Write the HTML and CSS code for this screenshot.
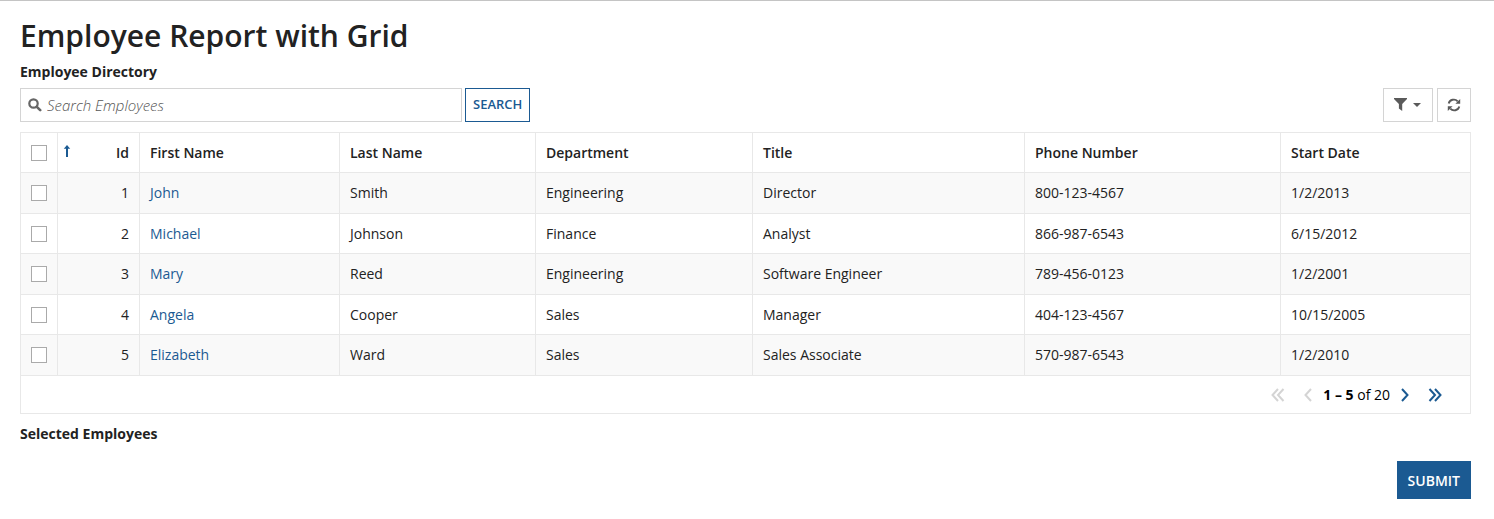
FILE: index.html
```html
<!DOCTYPE html>
<html lang="en">
<head>
  <meta charset="UTF-8" />
  <meta name="viewport" content="width=device-width, initial-scale=1.0" />
  <title>Employee Report with Grid</title>
  <link rel="stylesheet" href="styles.css">
</head>
<body>
  <main class="page">
    <h1>Employee Report with Grid</h1>

    <h2>Employee Directory</h2>
    <div class="toolbar">
      <form class="search" onsubmit="return false">
        <label class="search-box">
          <svg width="14" height="14" viewBox="0 0 14 14" aria-hidden="true"><circle cx="5.5" cy="5.5" r="4.2" fill="none" stroke="#666" stroke-width="2.2"/><path d="M8.8 8.8l3.4 3.4" stroke="#666" stroke-width="2.6" stroke-linecap="round"/></svg>
          <input type="text" placeholder="Search Employees" aria-label="Search Employees">
        </label>
        <button class="search-btn">SEARCH</button>
      </form>
      <div class="tools">
        <button class="tool filter" aria-label="Filter">
          <svg width="13" height="13" viewBox="0 0 13 13"><path d="M0 0h13v1L8.2 6v7L4.9 10.4V6L0 1z" fill="#5a5a5a"/></svg>
          <svg width="8" height="4" viewBox="0 0 8 4"><path d="M0 0h8L4 4z" fill="#5a5a5a"/></svg>
        </button>
        <button class="tool" aria-label="Refresh">
          <svg width="14" height="14" viewBox="0 0 14 14"><path d="M1.7 5.6A5.3 5.3 0 0 1 10.7 3.3M12.3 8.4A5.3 5.3 0 0 1 3.3 10.7" fill="none" stroke="#5a5a5a" stroke-width="1.9"/><path d="M13.2 1v4.8H8.4zM.8 13V8.2h4.8z" fill="#5a5a5a"/></svg>
        </button>
      </div>
    </div>

    <div class="grid">
      <table>
        <colgroup>
          <col class="c-check"><col class="c-id"><col class="c-first"><col class="c-last"><col class="c-dept"><col class="c-title"><col class="c-phone"><col class="c-date">
        </colgroup>
        <thead>
          <tr>
            <th><input type="checkbox" aria-label="Select all"></th>
            <th>
              <div class="sorted">
                <svg width="8" height="12" viewBox="0 0 8 12" aria-hidden="true"><path d="M4 12V2" fill="none" stroke="#1b5a92" stroke-width="2"/><path d="M4 0l3.2 3.8H.8z" fill="#1b5a92"/></svg>
                Id
              </div>
            </th>
            <th>First Name</th>
            <th>Last Name</th>
            <th>Department</th>
            <th>Title</th>
            <th>Phone Number</th>
            <th>Start Date</th>
          </tr>
        </thead>
        <tbody>
          <tr>
            <td><input type="checkbox" aria-label="Select John Smith"></td>
            <td class="num">1</td>
            <td><a href="#">John</a></td>
            <td>Smith</td>
            <td>Engineering</td>
            <td>Director</td>
            <td>800-123-4567</td>
            <td>1/2/2013</td>
          </tr>
          <tr>
            <td><input type="checkbox" aria-label="Select Michael Johnson"></td>
            <td class="num">2</td>
            <td><a href="#">Michael</a></td>
            <td>Johnson</td>
            <td>Finance</td>
            <td>Analyst</td>
            <td>866-987-6543</td>
            <td>6/15/2012</td>
          </tr>
          <tr>
            <td><input type="checkbox" aria-label="Select Mary Reed"></td>
            <td class="num">3</td>
            <td><a href="#">Mary</a></td>
            <td>Reed</td>
            <td>Engineering</td>
            <td>Software Engineer</td>
            <td>789-456-0123</td>
            <td>1/2/2001</td>
          </tr>
          <tr>
            <td><input type="checkbox" aria-label="Select Angela Cooper"></td>
            <td class="num">4</td>
            <td><a href="#">Angela</a></td>
            <td>Cooper</td>
            <td>Sales</td>
            <td>Manager</td>
            <td>404-123-4567</td>
            <td>10/15/2005</td>
          </tr>
          <tr>
            <td><input type="checkbox" aria-label="Select Elizabeth Ward"></td>
            <td class="num">5</td>
            <td><a href="#">Elizabeth</a></td>
            <td>Ward</td>
            <td>Sales</td>
            <td>Sales Associate</td>
            <td>570-987-6543</td>
            <td>1/2/2010</td>
          </tr>
        </tbody>
      </table>

      <div class="pager">
        <button disabled aria-label="First page"><svg width="14" height="14" viewBox="0 0 14 14"><path d="M7 1L1.5 7 7 13M12.5 1L7 7l5.5 6"/></svg></button>
        <button disabled aria-label="Previous page"><svg width="8" height="14" viewBox="0 0 8 14"><path d="M7 1L1.5 7 7 13"/></svg></button>
        <span><b>1 – 5</b> of 20</span>
        <button aria-label="Next page"><svg width="8" height="14" viewBox="0 0 8 14"><path d="M1 1l5.5 6L1 13"/></svg></button>
        <button aria-label="Last page"><svg width="14" height="14" viewBox="0 0 14 14"><path d="M1.5 1L7 7l-5.5 6M7 1l5.5 6L7 13"/></svg></button>
      </div>
    </div>

    <h2>Selected Employees</h2>

    <div class="actions">
      <button class="submit">SUBMIT</button>
    </div>
  </main>
</body>
</html>
```
FILE: styles.css
```css
* {
  box-sizing: border-box;
}
body {
  margin: 0;
  font-family: "Open Sans", sans-serif;
  font-size: 14px;
  line-height: 20px;
  color: #222;
  background: #fff;
  border-top: 1px solid #c4c4c4;
}
button, input {
  font-family: inherit;
  margin: 0;
}
button {
  cursor: pointer;
}
svg {
  display: block;
  flex: none;
}
.page {
  padding: 15px 23px 20px 20px;
}
h1 {
  margin: 0;
  font-size: 30px;
  line-height: 40px;
  font-weight: 600;
}
h2 {
  margin: 6px 0;
  font-size: 14px;
  line-height: 20px;
  font-weight: 700;
}
.toolbar {
  display: flex;
  justify-content: space-between;
  margin-bottom: 10px;
}
.search, .tools {
  display: flex;
  gap: 4px;
}
.search {
  gap: 3px;
}
.search-box {
  display: flex;
  align-items: center;
  gap: 5px;
  width: 442px;
  height: 34px;
  padding: 0 7px;
  border: 1px solid #d4d4d4;
}
.search-box input {
  flex: 1;
  border: none;
  outline: none;
  padding: 0;
  font-size: 15px;
  line-height: 20px;
}
.search-box input::placeholder {
  color: #555;
  font-style: italic;
  font-weight: 300;
}
.search-btn {
  height: 34px;
  padding: 0 7px 2px;
  border: 1px solid #1b5a92;
  background: #fff;
  color: #1b5a92;
  font-size: 13px;
  font-weight: 600;
}
.tool {
  display: flex;
  align-items: center;
  justify-content: center;
  gap: 6px;
  width: 34px;
  height: 34px;
  padding: 0 1px 1px 0;
  border: 1px solid #d4d4d4;
  background: #fff;
}
.filter {
  width: 50px;
}
.grid {
  margin-bottom: 10px;
  border-bottom: 1px solid #e8e8e8;
}
table {
  width: 100%;
  table-layout: fixed;
  border-collapse: collapse;
}
.c-check { width: 37px; }
.c-id { width: 82px; }
.c-first { width: 200px; }
.c-last { width: 196px; }
.c-dept { width: 217px; }
.c-title { width: 272px; }
.c-phone { width: 256px; }
.c-date { width: 190px; }
th, td {
  height: 41px;
  padding: 0 10px;
  border: 1px solid #e8e8e8;
  text-align: left;
}
th, tbody tr:nth-child(even) td {
  height: 40px;
}
th {
  font-weight: 600;
}
tbody tr:nth-child(odd) {
  background: #f9f9f9;
}
td.num {
  text-align: right;
}
.sorted {
  display: flex;
  justify-content: space-between;
  margin-left: -5px;
}
.sorted svg {
  margin-top: 2px;
}
a {
  color: #1b5a92;
  text-decoration: none;
}
input[type="checkbox"] {
  display: block;
  appearance: none;
  width: 16px;
  height: 16px;
  border: 1px solid #aaa;
  background: #fff;
}
input[type="checkbox"]:checked {
  background: #1b5a92;
}
.pager {
  display: flex;
  align-items: center;
  justify-content: flex-end;
  gap: 3px;
  height: 37px;
  padding-right: 20px;
  border: solid #e8e8e8;
  border-width: 0 1px;
  color: #000;
}
.pager button {
  padding: 0 8px;
  border: none;
  background: none;
}
.pager path {
  fill: none;
  stroke: #1b5a92;
  stroke-width: 2;
}
.pager button:disabled path {
  stroke: #d4d4d4;
}
.actions {
  display: flex;
  justify-content: flex-end;
  margin-top: 17px;
}
.submit {
  height: 38px;
  padding: 0 11px;
  border: none;
  background: #1b5a92;
  color: #fff;
  font-size: 14px;
  font-weight: 600;
}
```
